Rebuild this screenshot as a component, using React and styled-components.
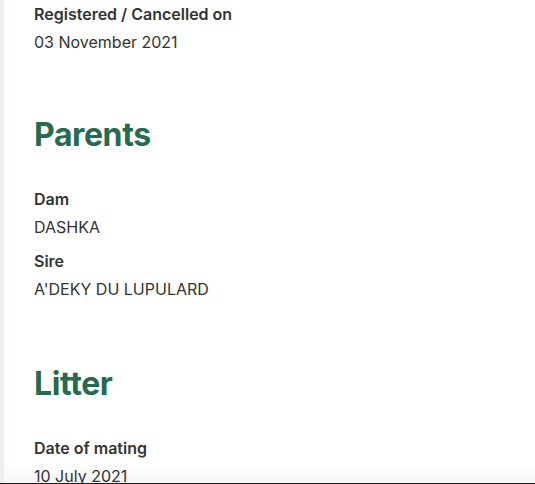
import React from 'react'
import styled, { createGlobalStyle } from 'styled-components'

const GlobalStyle = createGlobalStyle`
  html, body {
    margin: 0;
    padding: 0;
    background: #ffffff;
  }
  body {
    font-family: Inter, "Liberation Sans", sans-serif;
    color: #333333;
  }
`

function Field({ label, value }) {
  return (
    <FieldWrap>
      <Label>{label}</Label>
      <Value>{value}</Value>
    </FieldWrap>
  )
}

function App() {
  return (
    <Page>
      <GlobalStyle />
      <Edge />
      <Content>
        <Field label="Registered / Cancelled on" value="03 November 2021" />
        <Section>
          <Heading>Parents</Heading>
          <Fields>
            <Field label="Dam" value="DASHKA" />
            <Field label="Sire" value="A'DEKY DU LUPULARD" />
          </Fields>
        </Section>
        <Section>
          <Heading>Litter</Heading>
          <Fields>
            <Field label="Date of mating" value="10 July 2021" />
          </Fields>
        </Section>
      </Content>
      <Fade />
    </Page>
  )
}

export default App

const Page = styled.div`
    position: relative;
    display: flex;
    width: 535px;
    height: 484px;
    overflow: hidden;
    background: #ffffff;
    border-bottom: 1px solid #1a1a1a;
    box-sizing: border-box;
`

const Edge = styled.div`
    width: 4px;
    flex-shrink: 0;
    background: #f0ede6;
`

const Content = styled.div`
    position: relative;
    z-index: 1;
    padding: 1px 0 0 30px;
    display: flex;
    flex-direction: column;
`

const Section = styled.div`
    display: flex;
    flex-direction: column;
`

const Heading = styled.h2`
    margin: 0;
    padding-top: 57px;
    font-size: 32px;
    line-height: 44px;
    font-weight: 700;
    letter-spacing: -0.4px;
    color: #276a50;
`

const Fields = styled.div`
    display: flex;
    flex-direction: column;
    gap: 7px;
    padding: 29px 0 2px;
`

const FieldWrap = styled.div`
    display: flex;
    flex-direction: column;
`

const Label = styled.div`
    font-size: 16px;
    line-height: 27px;
    font-weight: 600;
    color: #333333;
`

const Value = styled.div`
    font-size: 16px;
    line-height: 28px;
    font-weight: 400;
    color: #333333;
`

const Fade = styled.div`
    position: absolute;
    left: 0;
    right: 0;
    bottom: 0;
    height: 20px;
    background: linear-gradient(to bottom, rgba(238, 238, 238, 0), rgba(238, 238, 238, 0.6));
    pointer-events: none;
`
